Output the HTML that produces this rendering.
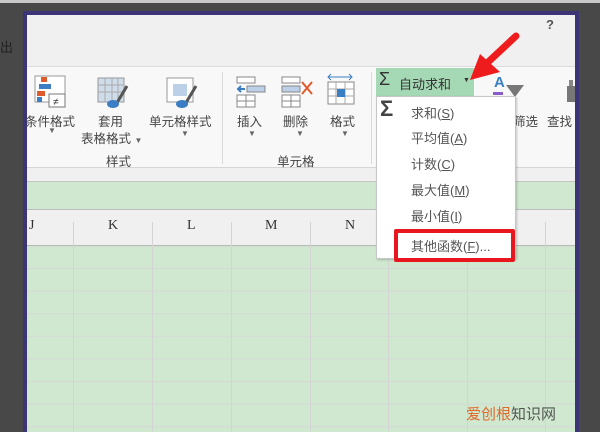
<!DOCTYPE html>
<html><head><meta charset="utf-8"><style>
*{margin:0;padding:0;box-sizing:border-box}
body{width:600px;height:432px;overflow:hidden;background:#484848;position:relative;font-family:"Liberation Sans","Noto Sans CJK SC",sans-serif}
.a{position:absolute}
.t{position:absolute;font-size:12.5px;color:#444;white-space:nowrap}
.m{position:absolute;font-size:13px;color:#555;white-space:nowrap}
.col{position:absolute;top:218px;font-family:"Liberation Serif",serif;font-size:14px;color:#333}
</style></head><body>
<div class="a" style="left:0;top:0;width:600px;height:3px;background:#c9c9c9"></div>
<div class="t" style="left:0;top:37px;color:#222;font-size:13px">出</div>
<div class="a" style="left:23px;top:11px;width:556px;height:421px;background:#3b3577"></div>
<div class="a" style="left:27px;top:15px;width:548px;height:417px;background:#f0f0f0"></div>
<div class="a" style="left:27px;top:66px;width:548px;height:102px;background:#f8f8f8;border-top:1px solid #dcdcdc;border-bottom:1px solid #d6d6d6"></div>
<div class="a" style="left:27px;top:181px;width:548px;height:29px;background:#cfe8cf;border-top:1px solid #c4c4c4;border-bottom:1px solid #bdbdbd"></div>
<div class="a" style="left:27px;top:210px;width:548px;height:36px;background:#f0f0f0;border-bottom:1px solid #b8b8b8"></div>
<div class="a" style="left:27px;top:246px;width:548px;height:186px;background:#cfe8cf;
background-image:linear-gradient(#d7d7d7 1px,transparent 1px);background-size:100% 22.6px;background-position:0 22px"></div>
<div class="a" style="left:73px;top:222px;width:1px;height:210px;background:#d4d4d4"></div>
<div class="a" style="left:152px;top:222px;width:1px;height:210px;background:#d4d4d4"></div>
<div class="a" style="left:231px;top:222px;width:1px;height:210px;background:#d4d4d4"></div>
<div class="a" style="left:310px;top:222px;width:1px;height:210px;background:#d4d4d4"></div>
<div class="a" style="left:388px;top:222px;width:1px;height:210px;background:#d4d4d4"></div>
<div class="a" style="left:467px;top:222px;width:1px;height:210px;background:#d4d4d4"></div>
<div class="a" style="left:545px;top:222px;width:1px;height:210px;background:#d4d4d4"></div>
<div class="col" style="left:29px">J</div>
<div class="col" style="left:108px">K</div>
<div class="col" style="left:187px">L</div>
<div class="col" style="left:265px">M</div>
<div class="col" style="left:345px">N</div>
<div class="t" style="left:546px;top:17px;font-weight:bold;font-size:13px;color:#555">?</div>
<svg class="a" style="left:33px;top:74px" width="36" height="36"><rect x="2" y="2" width="30" height="26" fill="#fff" stroke="#999"/><rect x="8" y="3" width="6" height="5" fill="#e05a2b"/><rect x="6" y="10" width="12" height="5" fill="#3b7ec4"/><rect x="4" y="17" width="8" height="5" fill="#e05a2b"/><rect x="4" y="23" width="5" height="5" fill="#3b7ec4"/><rect x="16" y="20" width="16" height="13" fill="#fff" stroke="#777"/><text x="20" y="31" font-size="10" fill="#333">≠</text></svg>
<svg class="a" style="left:97px;top:76px" width="36" height="34"><rect x="1" y="2" width="26" height="24" fill="#cfdcea" stroke="#999"/><path d="M1 9h26M1 16h26M8 2v24M15 2v24M21 2v24" stroke="#aaa"/><path d="M18 30l12-20" stroke="#555" stroke-width="3"/><ellipse cx="16" cy="28" rx="6" ry="4" fill="#3b7ec4"/></svg>
<svg class="a" style="left:166px;top:76px" width="36" height="34"><rect x="1" y="2" width="26" height="24" fill="#fff" stroke="#999"/><rect x="7" y="8" width="14" height="12" fill="#bcd1e8"/><path d="M18 30l12-20" stroke="#555" stroke-width="3"/><ellipse cx="16" cy="28" rx="6" ry="4" fill="#3b7ec4"/></svg>
<svg class="a" style="left:235px;top:76px" width="32" height="32"><rect x="2" y="1" width="18" height="6" fill="#fff" stroke="#888"/><rect x="12" y="10" width="18" height="6" fill="#bcd1e8" stroke="#888"/><path d="M10 13h-7M6 10l-3 3 3 3" stroke="#3b7ec4" fill="none" stroke-width="2"/><rect x="2" y="19" width="18" height="12" fill="#fff" stroke="#888"/><path d="M2 25h18M11 19v12" stroke="#888"/></svg>
<svg class="a" style="left:280px;top:76px" width="36" height="32"><rect x="2" y="1" width="18" height="6" fill="#fff" stroke="#888"/><rect x="2" y="10" width="18" height="6" fill="#bcd1e8" stroke="#888"/><path d="M22 6l10 12M32 6l-10 12" stroke="#e05a2b" stroke-width="2"/><rect x="2" y="19" width="18" height="12" fill="#fff" stroke="#888"/><path d="M2 25h18M11 19v12" stroke="#888"/></svg>
<svg class="a" style="left:326px;top:73px" width="32" height="36"><path d="M2 4h24M5 1l-3 3 3 3M23 1l3 3-3 3" stroke="#3b7ec4" fill="none"/><rect x="2" y="9" width="26" height="22" fill="#fff" stroke="#888"/><path d="M2 16h26M2 23h26M10 9v22M19 9v22" stroke="#aaa"/><rect x="11" y="16" width="8" height="8" fill="#3b7ec4"/></svg>
<div class="t" style="left:25px;top:111px">条件格式</div>
<div class="t" style="left:48px;top:126px;font-size:8px;color:#666">▼</div>
<div class="t" style="left:98px;top:111px">套用</div>
<div class="t" style="left:81px;top:128px">表格格式 <span style="font-size:8px;color:#666">▼</span></div>
<div class="t" style="left:149px;top:111px">单元格样式</div>
<div class="t" style="left:181px;top:129px;font-size:8px;color:#666">▼</div>
<div class="t" style="left:106px;top:151px">样式</div>
<div class="a" style="left:222px;top:72px;width:1px;height:92px;background:#dadada"></div>
<div class="t" style="left:237px;top:111px">插入</div>
<div class="t" style="left:248px;top:129px;font-size:8px;color:#666">▼</div>
<div class="t" style="left:283px;top:111px">删除</div>
<div class="t" style="left:296px;top:129px;font-size:8px;color:#666">▼</div>
<div class="t" style="left:330px;top:111px">格式</div>
<div class="t" style="left:341px;top:129px;font-size:8px;color:#666">▼</div>
<div class="t" style="left:277px;top:151px">单元格</div>
<div class="a" style="left:371px;top:72px;width:1px;height:92px;background:#dadada"></div>
<div class="t" style="left:494px;top:74px;color:#3b7ec4;font-weight:bold;font-size:15px">A</div>
<div class="a" style="left:493px;top:92px;width:10px;height:3px;background:#8a5cc8"></div>
<svg class="a" style="left:505px;top:84px" width="20" height="14"><path d="M1 1h18l-9 12z" fill="#777"/></svg>
<svg class="a" style="left:565px;top:76px" width="12" height="28"><path d="M2 10h8v16H2z" fill="#777"/><path d="M4 4h4v6H4z" fill="#888"/></svg>
<div class="t" style="left:513px;top:111px">筛选</div>
<div class="t" style="left:547px;top:111px">查找</div>
<div class="a" style="left:376px;top:68px;width:98px;height:28px;background:#a5d8b5"></div>
<div class="t" style="left:379px;top:69px;font-size:18px;color:#333">Σ</div>
<div class="t" style="left:399px;top:74px;color:#333;font-size:13px">自动求和</div>
<div class="t" style="left:463px;top:77px;font-size:7px;color:#333">▼</div>
<div class="a" style="left:376px;top:96px;width:140px;height:163px;background:#fff;border:1px solid #c6c6c6;box-shadow:1px 1px 2px rgba(0,0,0,.2)"></div>
<div class="t" style="left:380px;top:96px;font-size:22px;color:#444;font-weight:bold">Σ</div>
<div class="m" style="left:411px;top:103px">求和(<u>S</u>)</div>
<div class="m" style="left:411px;top:128px">平均值(<u>A</u>)</div>
<div class="m" style="left:411px;top:154px">计数(<u>C</u>)</div>
<div class="m" style="left:411px;top:180px">最大值(<u>M</u>)</div>
<div class="m" style="left:411px;top:206px">最小值(<u>I</u>)</div>
<div class="a" style="left:394px;top:229px;width:121px;height:33px;border:4px solid #e8161f;border-radius:2px;background:#fff"></div>
<div class="m" style="left:411px;top:236px">其他函数(<u>F</u>)...</div>
<svg class="a" style="left:460px;top:28px" width="70" height="60"><path d="M56 8L26 36" stroke="#ee1c1c" stroke-width="7" stroke-linecap="round"/><path d="M10 52L40 44 20 26z" fill="#ee1c1c"/></svg>
<div class="t" style="left:466px;top:403px;font-size:15px;color:#e06a2a">爱创根<span style="color:#555">知识网</span></div>
</body></html>
